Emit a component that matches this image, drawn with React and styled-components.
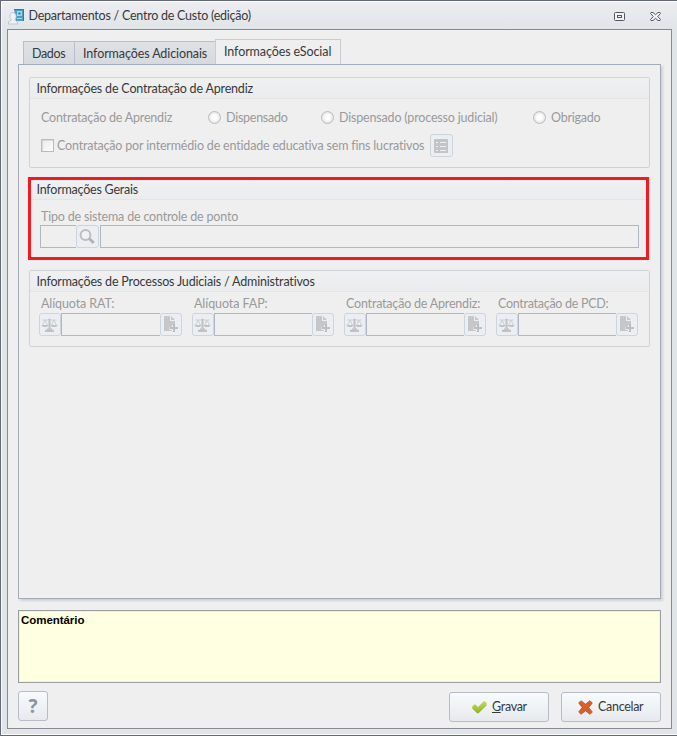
import React from 'react';
import styled, { createGlobalStyle, css } from 'styled-components';

const GlobalStyle = createGlobalStyle`
    * {
        box-sizing: border-box;
    }
    body {
        margin: 0;
        overflow: hidden;
    }
`;

const Window = styled.div`
    width: 677px;
    height: 736px;
    padding: 0 5px 6px 6px;
    border: 1px solid #636976;
    border-right: none;
    box-shadow: inset 1px 1px 0 #fbfaff, inset 0 -1px 0 #fafbfc;
    background: linear-gradient(to bottom, #ededf2 0, #e0e5e8 28px, #e1e5e9 100%);
    font-family: Lato, 'Liberation Sans', sans-serif;
    font-size: 12.5px;
    line-height: 16px;
    color: #37393b;
    white-space: nowrap;
`;

const TitleBar = styled.header`
    display: flex;
    align-items: center;
    height: 28px;
    padding: 2px 11px 0 1px;
`;

const Text = styled.span`
    font-variant-ligatures: none;
    letter-spacing: ${({ $spacing = -0.18 }) => $spacing}px;
`;

const Title = styled.h1`
    flex: 1;
    margin: 0 0 0 3.5px;
    font-size: inherit;
    font-weight: normal;
`;

const WindowControls = styled.div`
    display: flex;
    gap: 25px;
    padding-top: 1px;
`;

const Client = styled.main`
    display: flex;
    flex-direction: column;
    height: 700px;
    padding: 9px 10px 6px;
    border: 1px solid #858b91;
    background: #efefef;
`;

const TabList = styled.div`
    display: flex;
    flex: none;
    align-items: flex-end;
    height: 26px;
    margin-bottom: -1px;
    padding-left: 5px;
`;

const Tab = styled.div`
    width: ${({ $width }) => $width}px;
    height: 24px;
    padding: 4px 0 0 8px;
    border: 1px solid #b9bec8;
    border-right: none;
    border-bottom-color: #d9dce0;
    background: linear-gradient(to bottom, #dfe2e5, #d6d9dd);
    ${({ $active }) => $active && css`
        height: 26px;
        border: 1px solid #c9ccd0;
        border-bottom: none;
        background: #efefef;
    `}
`;

const TabPanel = styled.section`
    display: flex;
    flex: none;
    flex-direction: column;
    gap: 10px;
    height: 535px;
    padding: 12px 10px;
    border: 1px solid #a4abb8;
    box-shadow: 2px 2px 2px #d3d3d6;
`;

const Group = styled.section`
    height: ${({ $height }) => $height}px;
    border: 1px solid #d0d3d6;
    border-radius: 2px;
    ${({ $highlight }) => $highlight && css`
        margin: -1px 0 0 -1px;
        width: 621px;
        border: 3px solid #ed1c24;
        border-radius: 0;
        box-shadow: 1px 0 0 #dcdfe1;
    `}
`;

const GroupTitle = styled.h2`
    height: ${({ $height }) => $height || 21}px;
    margin: 0;
    padding: ${({ $pad }) => $pad || '3px 0 0 6.5px'};
    border-bottom: 1px solid #e2e4e6;
    background: linear-gradient(to bottom, #f0f0f0, #eaecee);
    font-size: inherit;
    font-weight: normal;
`;

const HiringRow = styled.div`
    display: grid;
    grid-template-columns: 167px 113px 212px auto;
    align-items: center;
    height: 19px;
    margin-top: 9px;
    padding-left: 11px;
    color: #9a9a9a;
`;

const Option = styled.label`
    display: flex;
    align-items: center;
    gap: 5px;
`;

const Radio = styled.span`
    width: 13px;
    height: 13px;
    border: 1px solid #babcc0;
    border-radius: 50%;
    background: radial-gradient(circle, #fff 30%, #ececec 60%, #cfd0d2 100%);
`;

const EntityRow = styled.div`
    display: flex;
    align-items: center;
    height: 23px;
    margin-top: 7px;
    padding-left: 11px;
    color: #9a9a9a;
`;

const EntityText = styled.div`
    width: 373px;
`;

const Checkbox = styled.span`
    width: 13px;
    height: 13px;
    margin-right: 3px;
    border: 1px solid #babbbd;
    background: linear-gradient(135deg, #e9eaeb, #fdfdfd);
    box-shadow: inset 1px 1px 0 #d8d9da;
`;

const IconButton = styled.button`
    display: flex;
    flex: none;
    align-items: center;
    justify-content: center;
    width: ${({ $width }) => $width || 23}px;
    height: 23px;
    padding: 0 1px 0 0;
    border: 1px solid #cdd5dc;
    border-radius: 3px;
    background: #ebeff3;
`;

const Field = styled.div`
    flex: ${({ $width }) => ($width ? `0 0 ${$width}px` : 1)};
    height: 23px;
    border: 1px solid #b0b7c3;
    ${({ $joined }) => $joined && css`
        border-right: none;
    `}
`;

const FieldLabel = styled.div`
    height: ${({ $height }) => $height}px;
    padding-left: ${({ $indent }) => $indent || 0}px;
    color: #9a9a9a;
`;

const ClockSystem = styled.div`
    padding: 9px 7px 0 9px;
`;

const FieldRow = styled.div`
    display: flex;
`;

const WideField = styled(Field)`
    margin-left: 1px;
`;

const ProcessGrid = styled.div`
    display: grid;
    grid-template-columns: 143px 142px 142px 142px;
    gap: 10px;
    padding: 4px 0 0 9px;
`;

const Comment = styled.div`
    flex: none;
    height: 73px;
    margin-top: 11px;
    padding: 1px 2px;
    border: 1px solid #9b9ea2;
    box-shadow: inset 0 0 0 1px #efeff0;
    background: #ffffe1;
    color: #000;
    font: bold 11.5px/16px 'Liberation Sans', Arial, sans-serif;
`;

const Footer = styled.footer`
    display: flex;
    gap: 12px;
    margin-top: 8px;
`;

const PushButton = styled.button`
    display: flex;
    align-items: center;
    width: 100px;
    height: 30px;
    margin-top: 1px;
    padding: 0 0 0 ${({ $indent }) => $indent}px;
    border: 1px solid #b8bdc5;
    border-radius: 3px;
    background: linear-gradient(to bottom, #f8fbfd, #e6eaee);
    color: #37393b;
    font: inherit;
    gap: 5px;
`;

const HelpButton = styled(PushButton)`
    justify-content: center;
    width: 30px;
    margin: 0 auto 0 0;
    padding: 0;
    color: #8797a2;
    font: bold 19px/28px 'Open Sans', sans-serif;
`;

const AppIcon = () => (
    <svg width="17" height="17" viewBox="0 0 17 17">
        <path d="M6 1h10v12H8z" fill="#4a9fc4" />
        <path d="M6 1.500h9.500V13" fill="none" stroke="#2f7ba3" />
        <rect x="9" y="3" width="5" height="5" fill="#a5d5e8" />
        <rect x="10.500" y="4.500" width="2" height="2" fill="#2377a0" />
        <path d="M9 10.500h5" stroke="#a9d9e9" />
        <path d="M4.500 4.500C1.500 5 1 9.500 3.500 12L.5 14v2h9v-2L6.500 12c2.500-2 2.500-7-2-7.500z" fill="#eef2f4" stroke="#b4bfc5" strokeWidth=".8" />
    </svg>
);

const RestoreIcon = () => (
    <svg width="11" height="10" viewBox="0 0 11 10">
        <rect x=".5" y=".5" width="10" height="8" rx="1" fill="#f1f2f4" stroke="#54585d" />
        <rect x="3.500" y="3.500" width="4" height="2" fill="none" stroke="#54585d" />
    </svg>
);

const CloseIcon = () => (
    <svg width="11" height="10" viewBox="0 0 11 10">
        <path d="M1 .5h2l2.500 2.200L8 .5h2l.5 1-2.800 3 2.800 3-.5 1H8L5.500 6.300 3 8.500H1l-.5-1 2.800-3-2.800-3z" fill="#f4f5f7" stroke="#54585d" />
    </svg>
);

const ListIcon = () => (
    <svg width="14" height="14" viewBox="0 0 14 14">
        <rect width="14" height="14" rx="1" fill="#c2c4c6" />
        <path d="M2 3.500h2M6 3.500h6M2 7.500h2M6 7.500h6M2 11.500h2M6 11.500h6" stroke="#eef1f3" />
    </svg>
);

const SearchIcon = () => (
    <svg width="16" height="16" viewBox="0 0 16 16">
        <circle cx="6.500" cy="6" r="4.900" fill="#f0f2f4" stroke="#bcbec0" strokeWidth="2" />
        <path d="M10 9.500l4.800 4.300" stroke="#b1b3b5" strokeWidth="3" />
    </svg>
);

const ScaleIcon = () => (
    <svg width="17" height="14" viewBox="0 0 17 14">
        <path d="M1.500 2h5.500L8.500.5 10 2h5.500M4 2L1.500 7.500M4 2l2.500 5.500M13 2l-2.500 5.500M13 2l2.500 5.500" fill="none" stroke="#c9cccf" strokeWidth=".9" />
        <path d="M.5 7h7c0 2.700-7 2.700-7 0zM9.500 7h7c0 2.700-7 2.700-7 0z" fill="#c0c3c5" />
        <path d="M7.500 1h2v9.500h1.500v1.200h2V14H4v-2.300h2v-1.200h1.500z" fill="#c0c2c4" />
    </svg>
);

const AddFileIcon = () => (
    <svg width="15" height="17" viewBox="0 0 15 17">
        <path d="M1 0h6v5h5v4H9v2H6.500v3H9v1H1z" fill="#c5c7c9" />
        <path d="M8 0l4 4H8z" fill="#c5c7c9" />
        <path d="M11 8v8M7 12h8" stroke="#bcbec0" strokeWidth="2" />
    </svg>
);

const CheckIcon = () => (
    <svg width="15" height="14" viewBox="0 0 15 14">
        <defs>
            <linearGradient id="check" x1="0" y1="0" x2="0" y2="1">
                <stop offset="0" stopColor="#c3dc57" />
                <stop offset="1" stopColor="#94b822" />
            </linearGradient>
        </defs>
        <path d="M.3 6.300L3 4.300l3 2.700 6-6 2.500 1.500v2.300L6.500 13H5.200L.3 8z" fill="url(#check)" />
        <path d="M.5 8L5.300 12.800h1.200L14.300 5" fill="none" stroke="#86a52c" strokeWidth=".8" />
    </svg>
);

const CancelIcon = () => (
    <svg width="15" height="15" viewBox="0 0 15 15">
        <path d="M3 .7l4.500 3.500L12 .7 14.300 3l-3.500 4.500 3.500 4.500L12 14.300l-4.500-3.500L3 14.300.7 12l3.500-4.500L.7 3z" fill="#d8602a" stroke="#b84c22" strokeWidth=".8" strokeLinejoin="round" />
    </svg>
);

const processes = [
    { label: 'Alíquota RAT:', input: 99, spacing: -0.1 },
    { label: 'Alíquota FAP:', input: 98, spacing: -0.08 },
    { label: 'Contratação de Aprendiz:', input: 98, spacing: -0.2 },
    { label: 'Contratação de PCD:', input: 98, spacing: -0.28 },
];

const ProcessField = ({ label, input, spacing }) => (
    <div>
        <FieldLabel $height={17} $indent={2}>
            <Text $spacing={spacing}>{label}</Text>
        </FieldLabel>
        <FieldRow>
            <IconButton $width={22}><ScaleIcon /></IconButton>
            <Field $width={input} $joined />
            <IconButton $width={22}><AddFileIcon /></IconButton>
        </FieldRow>
    </div>
);

const RadioOption = ({ label, spacing }) => (
    <Option>
        <Radio />
        <Text $spacing={spacing}>{label}</Text>
    </Option>
);

export default function App() {
    return (
        <>
            <GlobalStyle />
            <Window>
                <TitleBar>
                    <AppIcon />
                    <Title><Text $spacing={-0.24}>Departamentos / Centro de Custo (edição)</Text></Title>
                    <WindowControls>
                        <RestoreIcon />
                        <CloseIcon />
                    </WindowControls>
                </TitleBar>
                <Client>
                    <TabList>
                        <Tab $width={51}><Text $spacing={-0.35}>Dados</Text></Tab>
                        <Tab $width={141}><Text $spacing={-0.1}>Informações Adicionais</Text></Tab>
                        <Tab $width={126} $active><Text $spacing={-0.1}>Informações eSocial</Text></Tab>
                    </TabList>
                    <TabPanel>
                        <Group $height={91}>
                            <GroupTitle><Text>Informações de Contratação de Aprendiz</Text></GroupTitle>
                            <HiringRow>
                                <Text $spacing={-0.2}>Contratação de Aprendiz</Text>
                                <RadioOption label="Dispensado" spacing={-0.25} />
                                <RadioOption label="Dispensado (processo judicial)" />
                                <RadioOption label="Obrigado" spacing={-0.25} />
                            </HiringRow>
                            <EntityRow>
                                <Checkbox />
                                <EntityText>
                                    <Text>Contratação por intermédio de entidade educativa sem fins lucrativos</Text>
                                </EntityText>
                                <IconButton><ListIcon /></IconButton>
                            </EntityRow>
                        </Group>
                        <Group $height={83} $highlight>
                            <GroupTitle $height={20} $pad="2px 0 0 5.5px">
                                <Text $spacing={-0.22}>Informações Gerais</Text>
                            </GroupTitle>
                            <ClockSystem>
                                <FieldLabel $height={16} $indent={1}>
                                    <Text>Tipo de sistema de controle de ponto</Text>
                                </FieldLabel>
                                <FieldRow>
                                    <Field $width={36} $joined />
                                    <IconButton><SearchIcon /></IconButton>
                                    <WideField />
                                </FieldRow>
                            </ClockSystem>
                        </Group>
                        <Group $height={77}>
                            <GroupTitle><Text>Informações de Processos Judiciais / Administrativos</Text></GroupTitle>
                            <ProcessGrid>
                                {processes.map((process) => (
                                    <ProcessField key={process.label} {...process} />
                                ))}
                            </ProcessGrid>
                        </Group>
                    </TabPanel>
                    <Comment><Text $spacing={-0.05}>Comentário</Text></Comment>
                    <Footer>
                        <HelpButton>?</HelpButton>
                        <PushButton $indent={22}>
                            <CheckIcon />
                            <Text $spacing={-0.3}><u>G</u>ravar</Text>
                        </PushButton>
                        <PushButton $indent={16}>
                            <CancelIcon />
                            <Text $spacing={-0.3}>Cancelar</Text>
                        </PushButton>
                    </Footer>
                </Client>
            </Window>
        </>
    );
}
